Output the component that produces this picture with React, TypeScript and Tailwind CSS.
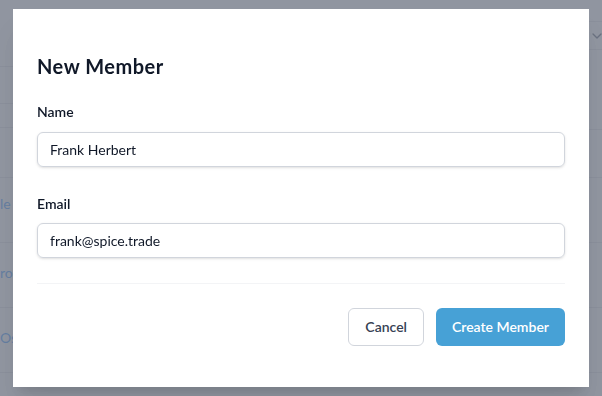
import { ChevronDown } from "lucide-react"

function Background() {
  return (
    <div className="flex h-full text-sm text-blue-400">
      <div className="w-[13px] overflow-hidden whitespace-nowrap">
        <div className="h-[67px] border-b border-gray-200" />
        <div className="h-[37px] border-b border-gray-200" />
        <div className="h-[24px] border-b border-gray-200" />
        <div className="h-[50px] border-b border-gray-200" />
        <div className="h-[65px] border-b border-gray-200 pt-4">le</div>
        <div className="h-[65px] border-b border-gray-200 pt-5">ros</div>
        <div className="h-[65px] border-b border-gray-200 pt-5">Osp</div>
      </div>
      <div className="flex-1" />
      <div className="w-[13px] overflow-hidden">
        <div className="h-[22px] border-b border-gray-200" />
        <div className="flex h-[28px] items-center border-b border-gray-200">
          <ChevronDown className="h-4 w-4 shrink-0 text-gray-500" />
        </div>
        <div className="h-[80px] border-b border-gray-200" />
        <div className="h-[48px] border-b border-gray-200" />
        <div className="h-[65px] border-b border-gray-200" />
        <div className="h-[65px] border-b border-gray-200" />
        <div className="h-[65px] border-b border-gray-200" />
      </div>
    </div>
  )
}

export default function App() {
  return (
    <div className="relative h-[396px] w-[602px] overflow-hidden bg-white font-['Lato',sans-serif]">
      <Background />

      <div className="fixed inset-0 flex items-center justify-center bg-[#6b7280]/75">
        <div className="w-[576px] bg-white px-6 pt-[43px] pb-[41px] shadow-xl">
          <h2 className="text-xl font-bold leading-7 tracking-[0.5px] text-gray-900">New Member</h2>

          <form>
            <label className="mt-[22px] block text-sm font-semibold leading-5 text-gray-900">Name</label>
            <input
              type="text"
              value="Frank Herbert"
              readOnly
              className="mt-2.5 block h-[35px] w-full rounded-md border border-gray-300 px-3 text-sm text-gray-900 shadow-sm outline-none"
            />

            <label className="mt-[27px] block text-sm font-semibold leading-5 text-gray-900">Email</label>
            <input
              type="email"
              value="frank@spice.trade"
              readOnly
              className="mt-[9px] block h-[35px] w-full rounded-md border border-gray-300 px-3 text-sm text-gray-900 shadow-sm outline-none"
            />

            <div className="mt-[25px] h-px bg-gray-100" />

            <div className="mt-6 flex justify-end gap-3">
              <button
                type="button"
                className="h-[38px] rounded-md border border-gray-300 bg-white px-4 text-sm font-semibold text-gray-700"
              >
                Cancel
              </button>
              <button
                type="button"
                className="h-[38px] rounded-md bg-[#47a1d6] px-4 text-sm font-semibold text-white"
              >
                Create Member
              </button>
            </div>
          </form>
        </div>
      </div>
    </div>
  )
}
